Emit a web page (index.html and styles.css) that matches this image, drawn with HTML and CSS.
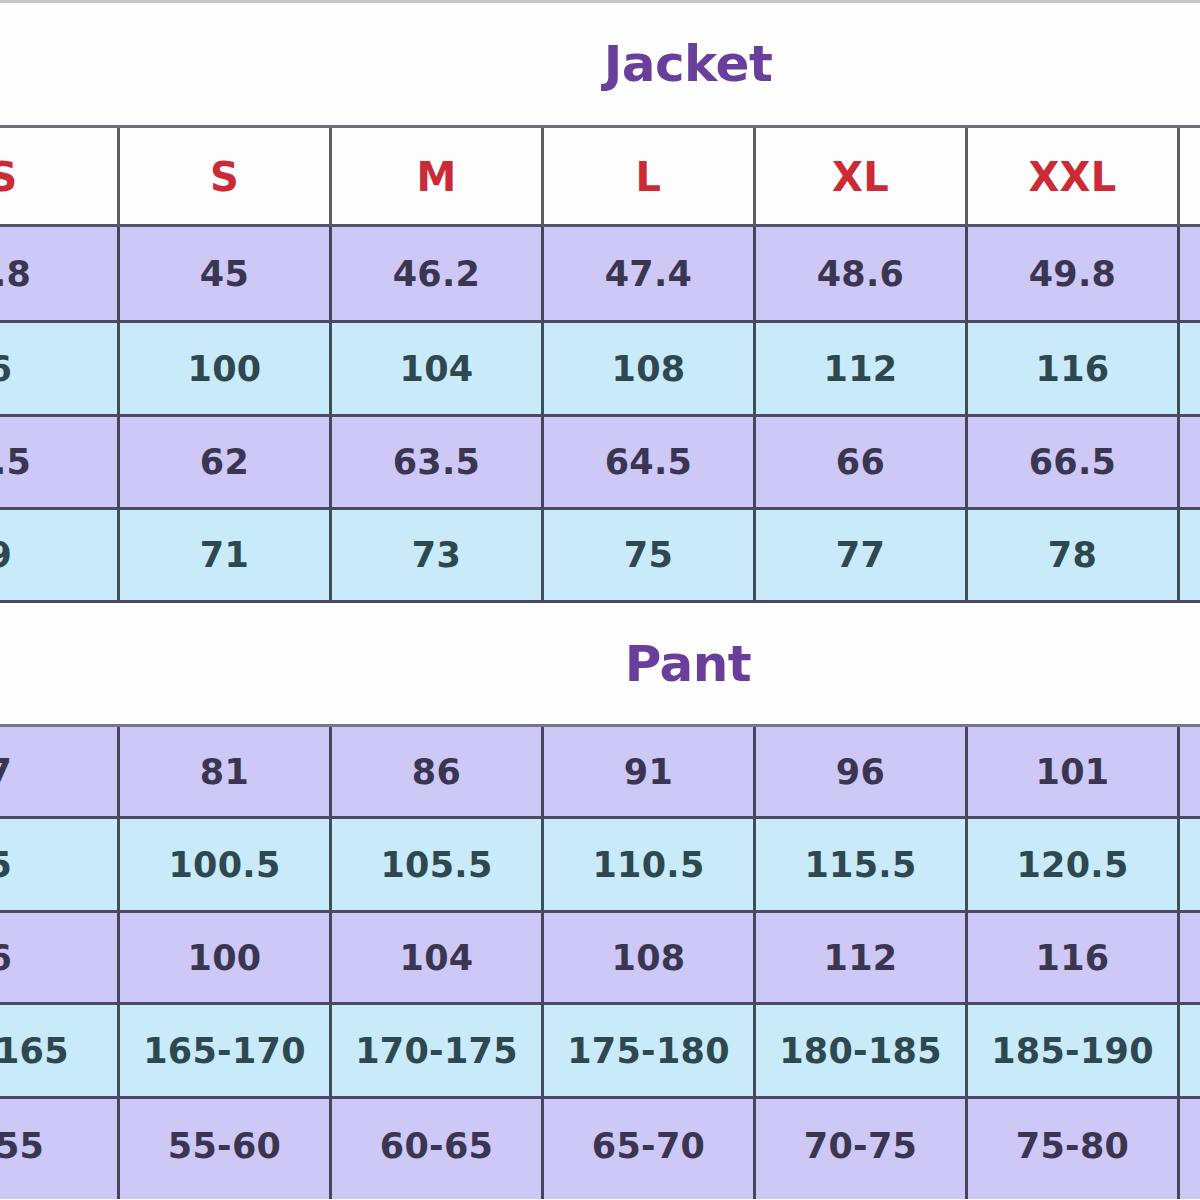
FILE: index.html
```html
<!DOCTYPE html>
<html>
<head>
<meta charset="utf-8">
<link rel="stylesheet" href="styles.css">
</head>
<body>
<div class="topline"></div>
<div class="title jacket-title">Jacket</div>
<div class="chart jacket">
  <div class="cell head">XS</div><div class="cell head">S</div><div class="cell head">M</div><div class="cell head">L</div><div class="cell head">XL</div><div class="cell head">XXL</div><div class="cell head"></div>
  <div class="cell p">43.8</div><div class="cell p">45</div><div class="cell p">46.2</div><div class="cell p">47.4</div><div class="cell p">48.6</div><div class="cell p">49.8</div><div class="cell p"></div>
  <div class="cell b">96</div><div class="cell b">100</div><div class="cell b">104</div><div class="cell b">108</div><div class="cell b">112</div><div class="cell b">116</div><div class="cell b"></div>
  <div class="cell p">60.5</div><div class="cell p">62</div><div class="cell p">63.5</div><div class="cell p">64.5</div><div class="cell p">66</div><div class="cell p">66.5</div><div class="cell p"></div>
  <div class="cell b">69</div><div class="cell b">71</div><div class="cell b">73</div><div class="cell b">75</div><div class="cell b">77</div><div class="cell b">78</div><div class="cell b"></div>
</div>
<div class="title pant-title">Pant</div>
<div class="chart pant">
  <div class="cell p">77</div><div class="cell p">81</div><div class="cell p">86</div><div class="cell p">91</div><div class="cell p">96</div><div class="cell p">101</div><div class="cell p"></div>
  <div class="cell b">95</div><div class="cell b">100.5</div><div class="cell b">105.5</div><div class="cell b">110.5</div><div class="cell b">115.5</div><div class="cell b">120.5</div><div class="cell b"></div>
  <div class="cell p">96</div><div class="cell p">100</div><div class="cell p">104</div><div class="cell p">108</div><div class="cell p">112</div><div class="cell p">116</div><div class="cell p"></div>
  <div class="cell b">160-165</div><div class="cell b">165-170</div><div class="cell b">170-175</div><div class="cell b">175-180</div><div class="cell b">180-185</div><div class="cell b">185-190</div><div class="cell b"></div>
  <div class="cell p last">50-55</div><div class="cell p last">55-60</div><div class="cell p last">60-65</div><div class="cell p last">65-70</div><div class="cell p last">70-75</div><div class="cell p last">75-80</div><div class="cell p last"></div>
</div>
</body>
</html>
```
FILE: styles.css
```css
html, body {
  margin: 0;
  padding: 0;
  background: #fefefe;
  overflow: hidden;
  font-family: "DejaVu Sans", "Liberation Sans", sans-serif;
  font-weight: bold;
}
.topline {
  height: 3px;
  background: #c8c8c8;
}
.title {
  display: flex;
  align-items: center;
  justify-content: center;
  padding-left: 176px;
  font-size: 50px;
  color: #6a3f9c;
  letter-spacing: -0.5px;
}
.jacket-title {
  height: 122px;
}
.pant-title {
  height: 121px;
}
.chart {
  display: grid;
  grid-template-columns: 262px repeat(6, 212px);
  margin-left: -142px;
  width: max-content;
  border-top: 3px solid #6e6e78;
}
.jacket {
  grid-template-rows: 99px 96px 94px 93px 93px;
}
.pant {
  grid-template-rows: 92px 94px 92px 94px 100px;
  border-top-color: #76768a;
}
.cell {
  box-sizing: border-box;
  display: flex;
  align-items: center;
  justify-content: center;
  border-right: 3px solid #454560;
  border-bottom: 3px solid #4a4a62;
  font-size: 35px;
  letter-spacing: 0.3px;
}
.last {
  border-bottom: none;
  padding-bottom: 6px;
}
.head {
  background: #fdfdfd;
  color: #cc2a35;
  font-size: 40px;
  border-right-color: #606064;
  border-bottom-color: #545466;
  padding-top: 2px;
}
.p {
  background: #cec8f6;
  color: #3a3550;
}
.b {
  background: #c9eaf8;
  color: #2e4850;
  border-right-color: #3e5058;
}
```
